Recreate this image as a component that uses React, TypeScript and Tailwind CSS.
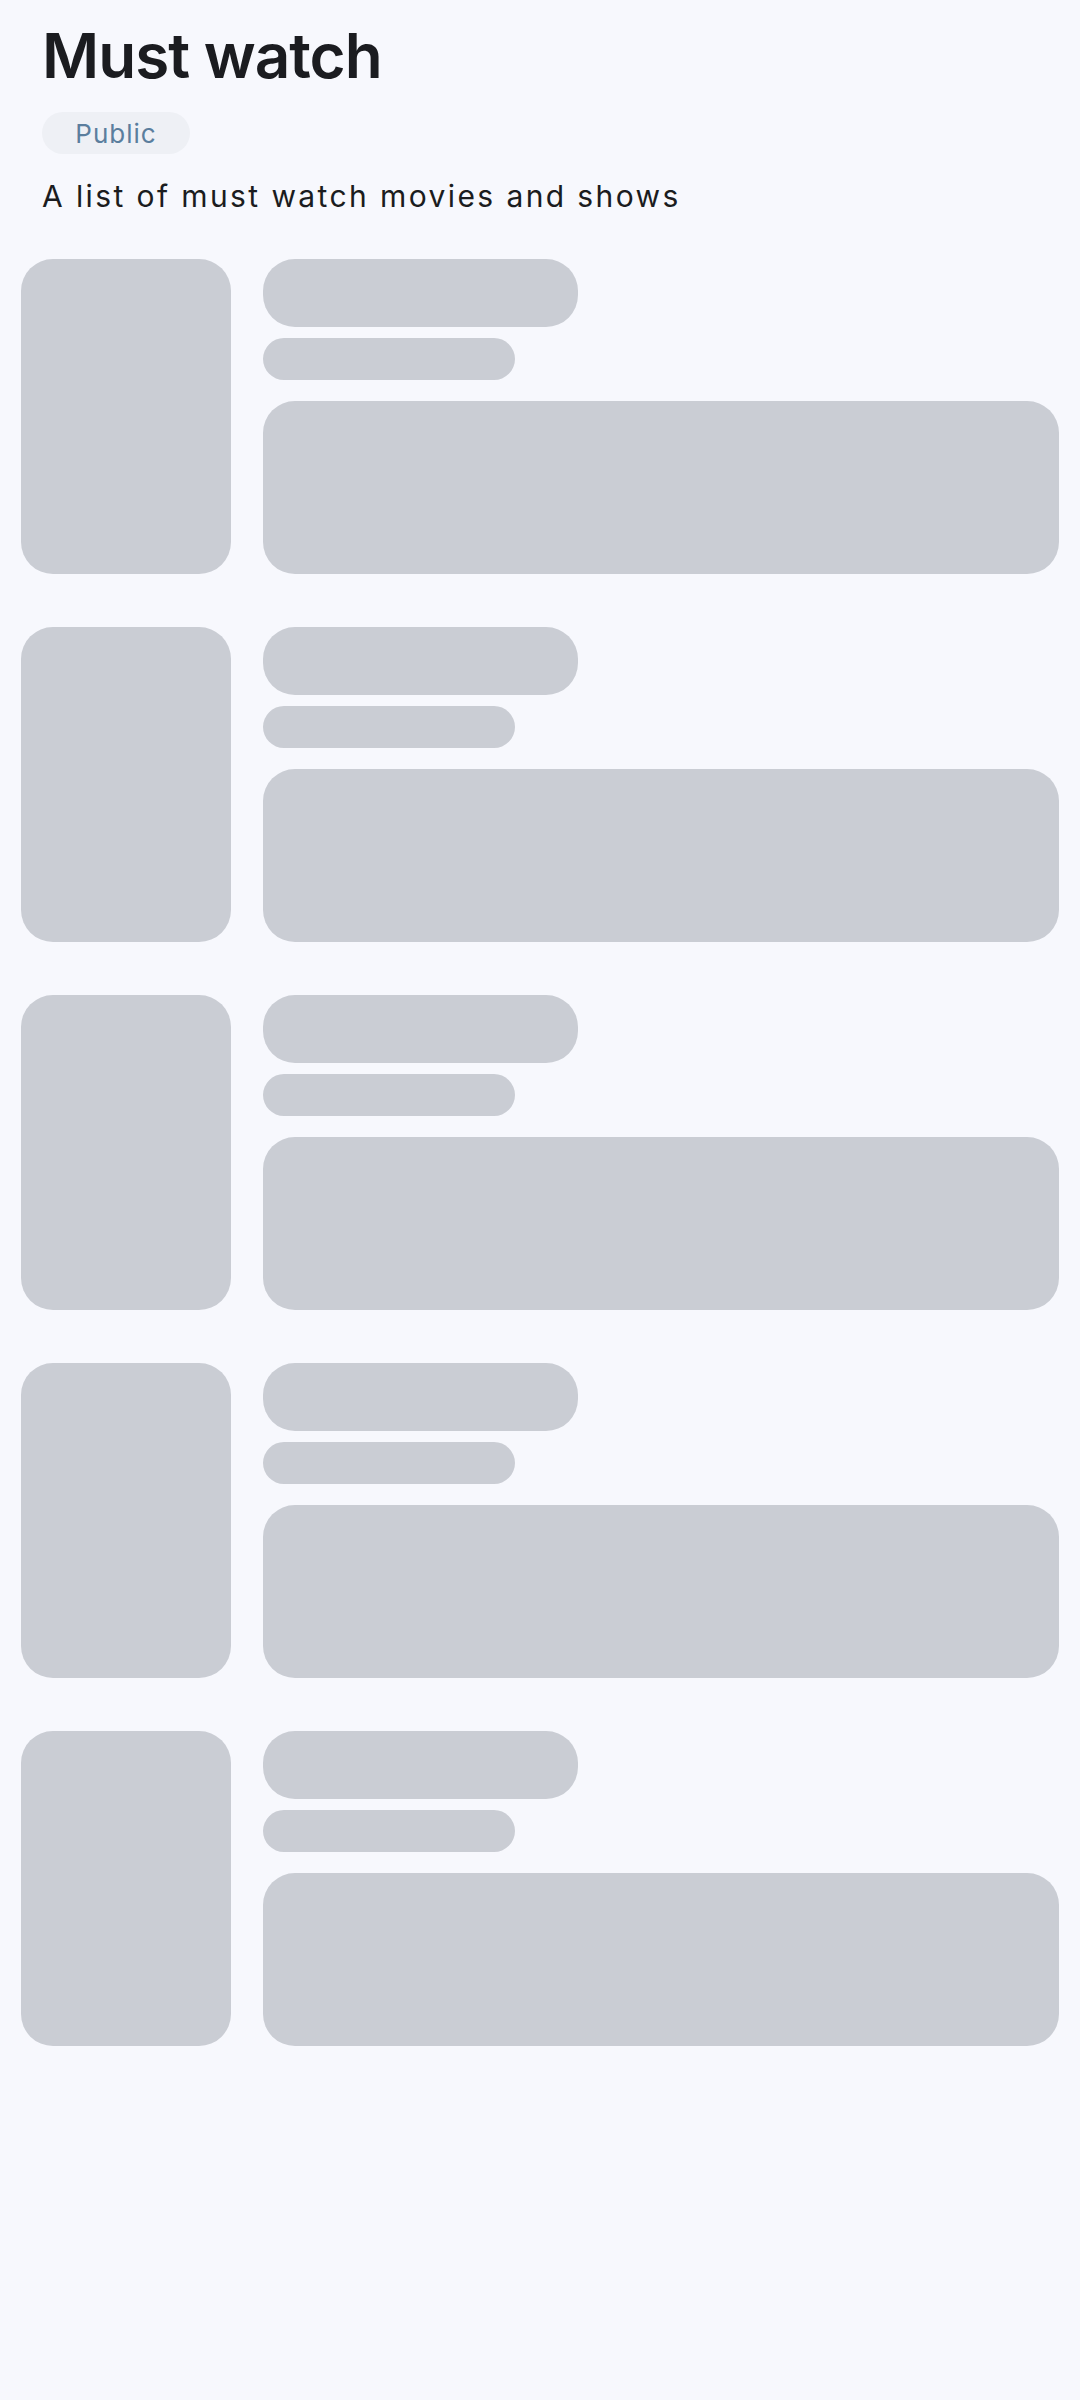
export default function App() {
  const rows = [0, 1, 2, 3, 4];

  return (
    <div className="min-h-screen bg-[#f7f8fd] text-[#1b1c20]" style={{ fontFamily: '"Inter", "Liberation Sans", sans-serif' }}>
      {/* Header */}
      <div className="px-[42px] pt-[18px]">
        <h1 className="text-[62px] leading-[76px] font-semibold tracking-[-1px]">Must watch</h1>
        <div className="mt-[18px] inline-flex items-center justify-center w-[148px] h-[42px] rounded-full bg-[#eef0f5] text-[26px] tracking-[1px] text-[#5b7e9e]">
          Public
        </div>
        <p className="mt-[22px] text-[30px] leading-[40px] tracking-[2.4px]">A list of must watch movies and shows</p>
      </div>

      {/* Skeleton list */}
      <div className="flex flex-col gap-[53px] px-[21px] pt-[43px] pb-[120px]">
        {rows.map((i) => (
          <div key={i} className="flex gap-[32px] h-[315px]">
            <div className="w-[210px] shrink-0 rounded-[32px] bg-[#cacdd4]" />
            <div className="flex-1 flex flex-col">
              <div className="w-[315px] h-[68px] rounded-[32px] bg-[#cacdd4]" />
              <div className="mt-[11px] w-[252px] h-[42px] rounded-full bg-[#cacdd4]" />
              <div className="mt-[21px] flex-1 rounded-[32px] bg-[#cacdd4]" />
            </div>
          </div>
        ))}
      </div>
    </div>
  );
}
